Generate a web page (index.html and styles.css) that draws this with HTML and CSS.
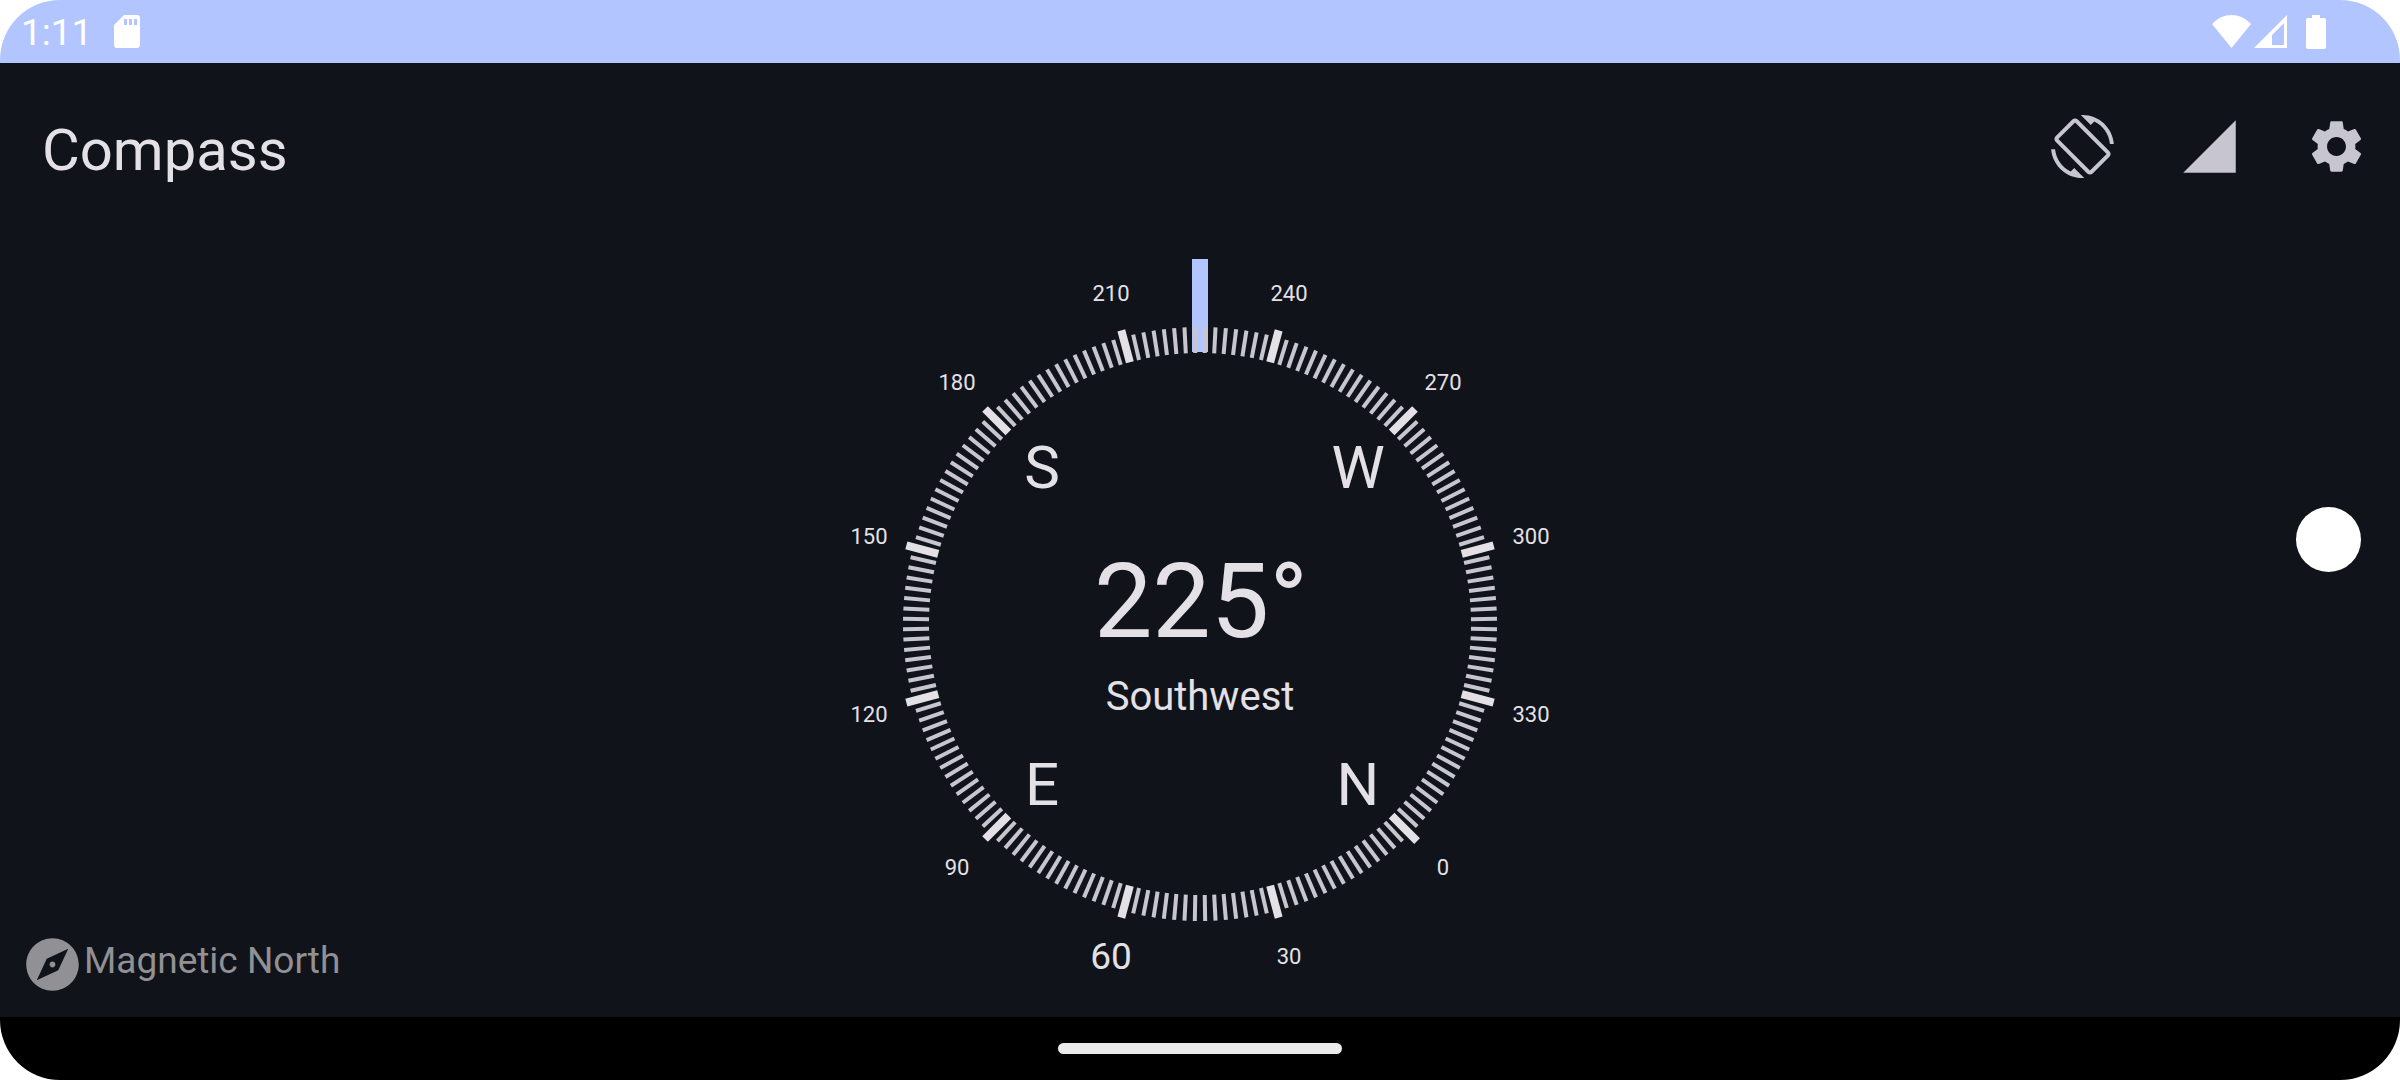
FILE: index.html
```
<!DOCTYPE html>
<html lang="en">
<head>
  <meta charset="utf-8">
  <meta name="viewport" content="width=device-width, initial-scale=1">
  <title>Compass</title>
  <link rel="stylesheet" href="styles.css">
</head>
<body>
  <div class="screen">
    <div class="status-bar">
      <time class="clock">1:11</time>
      <svg class="sd-icon" viewBox="0 0 26 33" aria-hidden="true"><path fill-rule="evenodd" d="M10 0h13a3 3 0 0 1 3 3v27a3 3 0 0 1-3 3H3a3 3 0 0 1-3-3V10zM10 4v6h3V4zM15 4v6h3V4zM20 4v6h3V4z"/></svg>
      <div class="status-icons">
        <svg class="wifi-icon" viewBox="0 0 39 33" aria-hidden="true"><path d="M0 9C11-3 28-3 39 9L19.500 33z"/></svg>
        <svg class="cell-icon" viewBox="0 0 33 33" aria-hidden="true"><path fill-rule="evenodd" d="M33 0v33H0zM30 8L18 20v10h12z"/></svg>
        <svg class="battery-icon" viewBox="0 0 20 34" aria-hidden="true"><path d="M6 0h8v3h4a2 2 0 0 1 2 2v27a2 2 0 0 1-2 2H2a2 2 0 0 1-2-2V5a2 2 0 0 1 2-2h4z"/></svg>
      </div>
    </div>

    <header class="app-bar">
      <h1 class="title">Compass</h1>
      <div class="actions">
        <button class="icon-button" type="button" aria-label="Screen rotation">
          <svg class="icon" viewBox="0 0 24 24" aria-hidden="true"><path d="M16.48 2.520c3.270 1.550 5.610 4.720 5.970 8.480h1.500C23.440 4.840 18.290 0 12 0l-.66.03 3.810 3.810 1.330-1.320zm-6.250-.77c-.59-.59-1.540-.59-2.120 0L1.750 8.110c-.59.59-.59 1.540 0 2.120l12.020 12.020c.59.59 1.540.59 2.120 0l6.360-6.360c.59-.59.59-1.540 0-2.120L10.230 1.750zm4.600 19.440L2.810 9.170l6.360-6.360 12.020 12.020-6.360 6.360zm-7.310.29C4.250 19.940 1.910 16.760 1.550 13H.05C.56 19.160 5.710 24 12 24l.66-.03-3.810-3.810-1.330 1.320z"/></svg>
        </button>
        <button class="icon-button" type="button" aria-label="Sensor accuracy">
          <svg class="icon" viewBox="0 0 24 24" aria-hidden="true"><path d="M2 22h20V2z"/></svg>
        </button>
        <button class="icon-button" type="button" aria-label="Settings">
          <svg class="icon" viewBox="0 0 24 24" aria-hidden="true"><path d="M19.140 12.940c.04-.3.06-.61.06-.94 0-.32-.02-.64-.07-.94l2.030-1.580c.18-.14.23-.41.12-.61l-1.920-3.320c-.12-.22-.37-.29-.59-.22l-2.390.96c-.5-.38-1.030-.7-1.620-.94l-.36-2.540c-.04-.24-.24-.41-.48-.41h-3.840c-.24 0-.43.17-.47.41l-.36 2.540c-.59.24-1.130.57-1.620.94l-2.390-.96c-.22-.08-.47 0-.59.22L2.740 8.870c-.12.21-.08.47.12.61l2.030 1.580c-.05.3-.09.63-.09.94s.02.64.07.94l-2.030 1.580c-.18.14-.23.41-.12.61l1.920 3.320c.12.22.37.29.59.22l2.390-.96c.5.38 1.030.7 1.620.94l.36 2.540c.05.24.24.41.48.41h3.840c.24 0 .44-.17.47-.41l.36-2.540c.59-.24 1.130-.56 1.620-.94l2.390.96c.22.08.47 0 .59-.22l1.920-3.320c.12-.22.07-.47-.12-.61l-2.010-1.580zM12 15.600c-1.980 0-3.600-1.620-3.600-3.600s1.620-3.600 3.600-3.600 3.600 1.620 3.600 3.600-1.620 3.600-3.600 3.600z"/></svg>
        </button>
      </div>
    </header>

    <main class="stage">
      <div class="north-type">
        <svg class="icon" viewBox="0 0 24 24" aria-hidden="true"><path d="M12 10.900c-.61 0-1.100.49-1.100 1.100s.49 1.100 1.100 1.100c.61 0 1.100-.49 1.100-1.100s-.49-1.100-1.100-1.100zM12 2C6.480 2 2 6.480 2 12s4.480 10 10 10 10-4.480 10-10S17.520 2 12 2zm2.190 12.190L6 18l3.810-8.190L18 6l-3.810 8.190z"/></svg>
        <span class="north-label">Magnetic North</span>
      </div>
      <svg class="dial" viewBox="-394 -394 788 787" role="img" aria-label="Compass dial, heading 225 degrees southwest">
        <rect class="needle" x="-8" y="-365" width="16" height="93"/>
        <g id="ticks"></g>
        <g id="labels"></g>
        <text class="heading" x="1" y="13">225°</text>
        <text class="direction" x="0" y="86">Southwest</text>
      </svg>
    </main>

    <div class="nav-bar">
      <button class="home-handle" type="button" aria-label="Home"></button>
    </div>
    <div class="camera"></div>
  </div>
  <script src="dial.js"></script>
</body>
</html>
```
FILE: styles.css
```
* {
  box-sizing: border-box;
}

body {
  margin: 0;
  background: #fff;
  font-family: Roboto, "Liberation Sans", sans-serif;
  color: #e4e1e6;
}

.screen {
  position: relative;
  display: flex;
  flex-direction: column;
  min-height: 100vh;
}

/* System status bar */
.status-bar {
  display: flex;
  align-items: center;
  height: 63px;
  padding: 0 74px 0 21px;
  border-radius: 60px 60px 0 0;
  background: #b3c5ff;
  color: #fff;
  fill: #fff;
}

.clock {
  width: 93px;
  padding-top: 2px;
  font-size: 37px;
  line-height: 44px;
}

.status-icons {
  display: flex;
  align-items: center;
  margin-left: auto;
}

.sd-icon {
  width: 26px;
  height: 33px;
}

.wifi-icon {
  width: 39px;
  height: 33px;
  margin-right: 3px;
}

.cell-icon {
  width: 33px;
  height: 33px;
  margin-right: 19px;
}

.battery-icon {
  width: 20px;
  height: 34px;
}

/* App bar */
.app-bar {
  display: flex;
  align-items: flex-start;
  justify-content: space-between;
  padding: 52px 32px 48px 42px;
  background: #10131a;
}

.title {
  margin: 0;
  padding-top: 3px;
  font-size: 58px;
  font-weight: 400;
  line-height: 64px;
}

.actions {
  display: flex;
  gap: 64px;
}

.icon-button {
  padding: 0;
  border: 0;
  background: none;
  color: #c6c5d0;
  cursor: pointer;
}

.icon {
  display: block;
  width: 63px;
  height: 63px;
  fill: currentColor;
}

/* Dial */
.stage {
  display: grid;
  flex: 1;
  grid-template-columns: 1fr auto 1fr;
  align-items: center;
  background: #10131a;
}

.north-type {
  display: flex;
  align-self: end;
  align-items: center;
  padding: 0 0 21px 21px;
  color: #919094;
}

.north-label {
  padding-bottom: 8px;
  font-size: 37px;
  line-height: 44px;
}

.dial {
  display: block;
  width: 788px;
  height: 787px;
  fill: #e4e1e6;
  text-anchor: middle;
}

.needle {
  fill: #b3c5ff;
}

.tick {
  stroke: #c6c5d0;
  stroke-width: 4px;
}

.tick-major {
  stroke: #e4e1e6;
  stroke-width: 8px;
}

.degree {
  font-size: 22px;
}

.degree-large {
  font-size: 37px;
}

.cardinal {
  font-size: 60px;
}

.heading {
  font-size: 104px;
}

.direction {
  font-size: 40px;
}

/* System navigation */
.nav-bar {
  display: flex;
  align-items: center;
  justify-content: center;
  height: 63px;
  border-radius: 0 0 60px 60px;
  background: #000;
}

.home-handle {
  width: 284px;
  height: 11px;
  padding: 0;
  border: 0;
  border-radius: 6px;
  background: #ebebeb;
}

/* Front camera cut-out, above the app */
.camera {
  position: absolute;
  top: 50%;
  right: 39px;
  width: 65px;
  height: 65px;
  margin-top: -33px;
  border-radius: 50%;
  background: #fff;
}
```
FILE: dial.js
```
const SVG = "http://www.w3.org/2000/svg";
const HEADING = 225;
const ticks = document.getElementById("ticks");
const labels = document.getElementById("labels");

function addTick(degree, className, inner, outer) {
  const line = document.createElementNS(SVG, "line");
  line.setAttribute("class", className);
  line.setAttribute("y1", -inner);
  line.setAttribute("y2", -outer);
  line.setAttribute("transform", `rotate(${degree - HEADING})`);
  ticks.append(line);
}

function addLabel(degree, className, radius, size, value) {
  const angle = (degree - HEADING) * Math.PI / 180;
  const text = document.createElementNS(SVG, "text");
  text.setAttribute("class", className);
  text.setAttribute("x", Math.round(Math.sin(angle) * radius));
  text.setAttribute("y", Math.round(1 - Math.cos(angle) * radius + size * 0.355));
  text.textContent = value;
  labels.append(text);
}

for (let d = 0; d < 360; d += 2) {
  if (d % 30) addTick(d, "tick", 271, 297);
}
for (let d = 0; d < 360; d += 30) {
  addTick(d, "tick-major", 271, d === 0 ? 307 : 304);
  const large = d === 60;
  addLabel(d, large ? "degree-large" : "degree", 343, large ? 37 : 22, d);
}
["N", "E", "S", "W"].forEach((name, i) => addLabel(i * 90, "cardinal", 224, 60, name));
```
